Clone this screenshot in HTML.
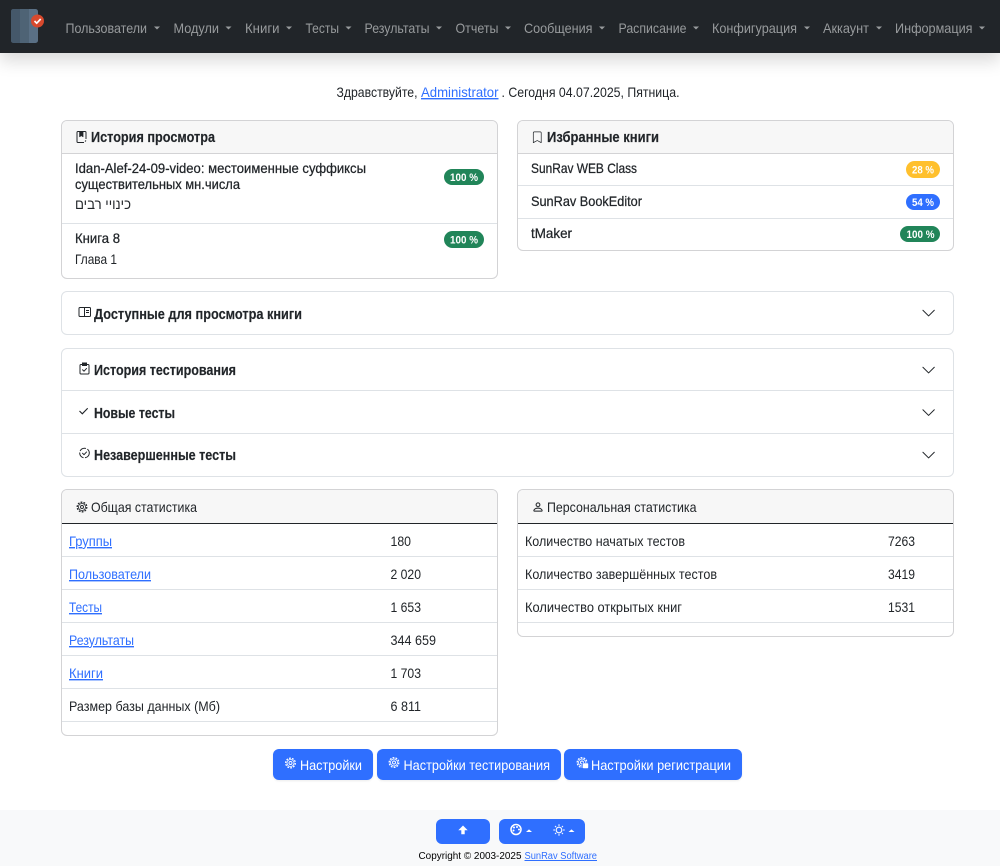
<!DOCTYPE html>
<html lang="ru">
<head>
<meta charset="utf-8">
<title>SunRav WEB Class</title>
<style>
html,body{margin:0;padding:0;background:#fff;width:1000px;height:866px;overflow:hidden;font-family:"Liberation Sans",sans-serif;}
.b{position:absolute;box-sizing:border-box;}
.card{border:1px solid #d3d3d5;border-radius:6px;background:#fff;}
.acc{border:1px solid #dee2e6;border-radius:6px;background:#fff;}
.hd{background:#f7f7f7;border-radius:5px 5px 0 0;}
.btn{background:#2f6fff;border-radius:6px;}
svg.o{position:absolute;left:0;top:0;}
svg.o text{font-family:"Liberation Sans",sans-serif;font-size:14px;fill:#212529;}
svg.o .n{fill:#989b9d;}
svg.o .h{font-weight:bold;font-size:14.5px;stroke:#212529;stroke-width:.15px;}
svg.o .m{stroke:#212529;stroke-width:.25px;}
svg.o .l{fill:#2f6fff;text-decoration:underline;}
svg.o .w{fill:#fff;}
svg.o .bd{fill:#fff;font-weight:bold;font-size:11px;}
.ln{fill:#dee2e6;}
</style>
</head>
<body>
<div class="b" style="left:0;top:0;width:1000px;height:53px;background:#212529;box-shadow:0 8px 16px rgba(0,0,0,.15);"></div>

<div class="b card" style="left:61px;top:120px;width:437px;height:159px;"></div>
<div class="b hd" style="left:62px;top:121px;width:435px;height:33px;border-bottom:1px solid #d3d3d5;"></div>
<div class="b card" style="left:517px;top:120px;width:437px;height:131px;"></div>
<div class="b hd" style="left:518px;top:121px;width:435px;height:33px;border-bottom:1px solid #d3d3d5;"></div>

<div class="b acc" style="left:61px;top:291px;width:893px;height:44px;"></div>
<div class="b acc" style="left:61px;top:348px;width:893px;height:129px;"></div>

<div class="b card" style="left:61px;top:489px;width:437px;height:247px;"></div>
<div class="b hd" style="left:62px;top:490px;width:435px;height:34px;border-bottom:1px solid #212529;"></div>
<div class="b card" style="left:517px;top:489px;width:437px;height:148px;"></div>
<div class="b hd" style="left:518px;top:490px;width:435px;height:34px;border-bottom:1px solid #212529;"></div>

<div class="b btn" style="left:273px;top:749px;width:100px;height:31px;box-shadow:0 1px 2px rgba(0,0,0,.08);"></div>
<div class="b btn" style="left:377px;top:749px;width:184px;height:31px;box-shadow:0 1px 2px rgba(0,0,0,.08);"></div>
<div class="b btn" style="left:564px;top:749px;width:178px;height:31px;box-shadow:0 1px 2px rgba(0,0,0,.08);"></div>

<div class="b" style="left:0;top:810px;width:1000px;height:56px;background:#f8f9fa;"></div>
<div class="b btn" style="left:436px;top:819px;width:54px;height:25px;"></div>
<div class="b btn" style="left:499px;top:819px;width:86px;height:25px;"></div>

<svg class="o" width="1000" height="866" viewBox="0 0 1000 866" xmlns="http://www.w3.org/2000/svg">
<defs>
<g id="gear"><circle cx="6" cy="6" r="4.800" fill="none" stroke-width="1.300" stroke-dasharray="1.800 1.200"/><circle cx="6" cy="6" r="3.500" fill="none" stroke-width=".8"/><circle cx="6" cy="6" r="1.500" fill="none" stroke-width=".9"/></g>
<path id="chev" d="M1.646 4.646a.5.5 0 0 1 .708 0L8 10.293l5.646-5.647a.5.5 0 0 1 .708.708l-6 6a.5.5 0 0 1-.708 0l-6-6a.5.5 0 0 1 0-.708z"/>
</defs>

<!-- logo -->
<rect x="11" y="9" width="27" height="34" rx="2.500" fill="#5a7085"/>
<path d="M13.500 9H20V43H13.500A2.500 2.500 0 0 1 11 40.500V11.500A2.500 2.500 0 0 1 13.500 9Z" fill="#45586a"/>
<rect x="20" y="9" width="9" height="34" fill="#4e6375"/>
<circle cx="37.500" cy="21" r="6.500" fill="#d8492d"/>
<path d="M34.500 21l2.200 2.200 4-4.200" fill="none" stroke="#fff" stroke-width="1.700"/>

<!-- nav -->
<g class="nav">
<text class="n" x="65.500" y="33" textLength="81.500" lengthAdjust="spacingAndGlyphs">Пользователи</text>
<text class="n" x="173.500" y="33" textLength="45.500" lengthAdjust="spacingAndGlyphs">Модули</text>
<text class="n" x="245" y="33" textLength="34.500" lengthAdjust="spacingAndGlyphs">Книги</text>
<text class="n" x="305.500" y="33" textLength="33.500" lengthAdjust="spacingAndGlyphs">Тесты</text>
<text class="n" x="364.500" y="33" textLength="65" lengthAdjust="spacingAndGlyphs">Результаты</text>
<text class="n" x="455.500" y="33" textLength="43" lengthAdjust="spacingAndGlyphs">Отчеты</text>
<text class="n" x="524" y="33" textLength="68.500" lengthAdjust="spacingAndGlyphs">Сообщения</text>
<text class="n" x="618.500" y="33" textLength="68" lengthAdjust="spacingAndGlyphs">Расписание</text>
<text class="n" x="712" y="33" textLength="85" lengthAdjust="spacingAndGlyphs">Конфигурация</text>
<text class="n" x="823" y="33" textLength="46" lengthAdjust="spacingAndGlyphs">Аккаунт</text>
<text class="n" x="895" y="33" textLength="77.500" lengthAdjust="spacingAndGlyphs">Информация</text>
<g fill="#989b9d">
<path d="M154 26.500h6l-3 3z"/><path d="M225.500 26.500h6l-3 3z"/><path d="M286 26.500h6l-3 3z"/><path d="M345.500 26.500h6l-3 3z"/><path d="M436 26.500h6l-3 3z"/><path d="M505 26.500h6l-3 3z"/><path d="M599 26.500h6l-3 3z"/><path d="M693 26.500h6l-3 3z"/><path d="M804 26.500h6l-3 3z"/><path d="M876 26.500h6l-3 3z"/><path d="M979 26.500h6l-3 3z"/>
</g>
</g>

<!-- greeting -->
<text x="336.500" y="97" textLength="81" lengthAdjust="spacingAndGlyphs">Здравствуйте,</text>
<text class="l" x="421" y="97" textLength="77.500" lengthAdjust="spacingAndGlyphs">Administrator</text>
<text x="501.500" y="97" textLength="178" lengthAdjust="spacingAndGlyphs">. Сегодня 04.07.2025, Пятница.</text>

<!-- card 1 -->
<g fill="none" stroke="#212529" stroke-width="1"><path d="M84 142.500H78a1 1 0 0 1-1-1V132.500a1 1 0 0 1 1-1H85a1 1 0 0 1 1 1V139"/><path d="M79.500 132v5l1.800-1.200 1.800 1.200v-5z" fill="#212529" stroke-width=".5"/><path d="M85 141.500l1-1" /></g>
<text class="h" x="91" y="142" textLength="124" lengthAdjust="spacingAndGlyphs">История просмотра</text>
<text class="m" x="75" y="173" textLength="291" lengthAdjust="spacingAndGlyphs">Idan-Alef-24-09-video: местоименные суффиксы</text>
<text class="m" x="75" y="189" textLength="165" lengthAdjust="spacingAndGlyphs">существительных мн.числа</text>
<text x="75" y="209" textLength="56" lengthAdjust="spacingAndGlyphs" direction="rtl" text-anchor="end">כינויי רבים</text>
<rect class="ln" x="62" y="223" width="435" height="1"/>
<text class="m" x="75" y="243" textLength="45" lengthAdjust="spacingAndGlyphs">Книга 8</text>
<text x="75" y="264" textLength="42" lengthAdjust="spacingAndGlyphs">Глава 1</text>
<rect x="444" y="169" width="40" height="16" rx="8" fill="#218559"/>
<text class="bd" x="450" y="181" textLength="28" lengthAdjust="spacingAndGlyphs">100 %</text>
<rect x="444" y="231" width="40" height="17" rx="8.500" fill="#218559"/>
<text class="bd" x="450" y="243.500" textLength="28" lengthAdjust="spacingAndGlyphs">100 %</text>

<!-- card 2 -->
<g transform="translate(531.500,131.500) scale(.72)"><path fill="#212529" d="M2 2a2 2 0 0 1 2-2h8a2 2 0 0 1 2 2v13.500a.5.5 0 0 1-.777.416L8 13.101l-5.223 2.815A.5.5 0 0 1 2 15.500V2zm2-1a1 1 0 0 0-1 1v12.566l4.723-2.482a.5.5 0 0 1 .554 0L13 14.566V2a1 1 0 0 0-1-1H4z"/></g>
<text class="h" x="547" y="142" textLength="112" lengthAdjust="spacingAndGlyphs">Избранные книги</text>
<text class="m" x="531" y="173" textLength="106" lengthAdjust="spacingAndGlyphs">SunRav WEB Class</text>
<rect class="ln" x="518" y="185" width="435" height="1"/>
<text class="m" x="531" y="206" textLength="111" lengthAdjust="spacingAndGlyphs">SunRav BookEditor</text>
<rect class="ln" x="518" y="218" width="435" height="1"/>
<text class="m" x="531" y="238" textLength="41" lengthAdjust="spacingAndGlyphs">tMaker</text>
<rect x="906" y="161" width="34" height="17" rx="8.500" fill="#ffc02d"/>
<text class="bd" x="912" y="173.500" textLength="22" lengthAdjust="spacingAndGlyphs">28 %</text>
<rect x="906" y="194" width="34" height="16" rx="8" fill="#2f6fff"/>
<text class="bd" x="912" y="206" textLength="22" lengthAdjust="spacingAndGlyphs">54 %</text>
<rect x="900" y="226" width="40" height="16" rx="8" fill="#218559"/>
<text class="bd" x="906.500" y="238" textLength="28" lengthAdjust="spacingAndGlyphs">100 %</text>

<!-- accordion -->
<g fill="none" stroke="#212529" stroke-width="1"><rect x="79" y="307.500" width="11.500" height="9" rx="1"/><path d="M84.500 307.500v9"/><path d="M86 310.500h3M86 312.500h3"/></g>
<text class="h" x="94" y="319" textLength="208" lengthAdjust="spacingAndGlyphs">Доступные для просмотра книги</text>
<g fill="none" stroke="#212529" stroke-width="1"><rect x="80" y="364.500" width="9" height="9.500" rx="1"/><rect x="82.500" y="363" width="4" height="2.500" fill="#212529"/><path d="M82.300 369.500l1.700 1.700 2.800-3"/></g>
<text class="h" x="94" y="375" textLength="142" lengthAdjust="spacingAndGlyphs">История тестирования</text>
<rect class="ln" x="62" y="390" width="891" height="1"/>
<path d="M79.500 411l2.800 2.800 5.400-5.600" fill="none" stroke="#212529" stroke-width="1.100"/>
<text class="h" x="94" y="418" textLength="81" lengthAdjust="spacingAndGlyphs">Новые тесты</text>
<rect class="ln" x="62" y="433" width="891" height="1"/>
<g fill="none" stroke="#212529" stroke-width="1"><circle cx="84.500" cy="453" r="4.800" stroke-dasharray="7 1.500"/><path d="M82.300 453l1.700 1.700 2.800-3"/></g>
<text class="h" x="94" y="460" textLength="142" lengthAdjust="spacingAndGlyphs">Незавершенные тесты</text>
<g fill="#212529">
<use href="#chev" transform="translate(921,305.500) scale(.95)"/>
<use href="#chev" transform="translate(921,362.500) scale(.95)"/>
<use href="#chev" transform="translate(921,405) scale(.95)"/>
<use href="#chev" transform="translate(921,447.500) scale(.95)"/>
</g>

<!-- stats left -->
<use href="#gear" transform="translate(76,501)" stroke="#212529"/>
<text x="91" y="512" textLength="106" lengthAdjust="spacingAndGlyphs">Общая статистика</text>
<text class="l" x="69" y="546" textLength="43" lengthAdjust="spacingAndGlyphs">Группы</text>
<text x="390.500" y="546" textLength="20.500" lengthAdjust="spacingAndGlyphs">180</text>
<rect class="ln" x="62" y="556" width="435" height="1"/>
<text class="l" x="69" y="579" textLength="82" lengthAdjust="spacingAndGlyphs">Пользователи</text>
<text x="390.500" y="579" textLength="30.500" lengthAdjust="spacingAndGlyphs">2 020</text>
<rect class="ln" x="62" y="589" width="435" height="1"/>
<text class="l" x="69" y="612" textLength="33" lengthAdjust="spacingAndGlyphs">Тесты</text>
<text x="390.500" y="612" textLength="30.500" lengthAdjust="spacingAndGlyphs">1 653</text>
<rect class="ln" x="62" y="622" width="435" height="1"/>
<text class="l" x="69" y="645" textLength="65" lengthAdjust="spacingAndGlyphs">Результаты</text>
<text x="390.500" y="645" textLength="45.500" lengthAdjust="spacingAndGlyphs">344 659</text>
<rect class="ln" x="62" y="655" width="435" height="1"/>
<text class="l" x="69" y="678" textLength="34" lengthAdjust="spacingAndGlyphs">Книги</text>
<text x="390.500" y="678" textLength="30.500" lengthAdjust="spacingAndGlyphs">1 703</text>
<rect class="ln" x="62" y="688" width="435" height="1"/>
<text x="69" y="711" textLength="151" lengthAdjust="spacingAndGlyphs">Размер базы данных (Мб)</text>
<text x="390.500" y="711" textLength="30.500" lengthAdjust="spacingAndGlyphs">6 811</text>
<rect class="ln" x="62" y="721" width="435" height="1"/>

<!-- stats right -->
<g transform="translate(532,501) scale(.75)"><path fill="#212529" stroke="#212529" stroke-width=".4" d="M8 8a3 3 0 1 0 0-6 3 3 0 0 0 0 6zm2-3a2 2 0 1 1-4 0 2 2 0 0 1 4 0zm4 8c0 1-1 1-1 1H3s-1 0-1-1 1-4 6-4 6 3 6 4zm-1-.004c-.001-.246-.154-.986-.832-1.664C11.516 10.680 10.289 10 8 10c-2.290 0-3.516.680-4.168 1.332-.678.678-.830 1.418-.832 1.664h10z"/></g>
<text x="547" y="512" textLength="149.500" lengthAdjust="spacingAndGlyphs">Персональная статистика</text>
<text x="525" y="546" textLength="160" lengthAdjust="spacingAndGlyphs">Количество начатых тестов</text>
<text x="888" y="546" textLength="27" lengthAdjust="spacingAndGlyphs">7263</text>
<rect class="ln" x="518" y="556" width="435" height="1"/>
<text x="525" y="579" textLength="192" lengthAdjust="spacingAndGlyphs">Количество завершённых тестов</text>
<text x="888" y="579" textLength="27" lengthAdjust="spacingAndGlyphs">3419</text>
<rect class="ln" x="518" y="589" width="435" height="1"/>
<text x="525" y="612" textLength="157" lengthAdjust="spacingAndGlyphs">Количество открытых книг</text>
<text x="888" y="612" textLength="27" lengthAdjust="spacingAndGlyphs">1531</text>
<rect class="ln" x="518" y="622" width="435" height="1"/>

<!-- buttons -->
<use href="#gear" transform="translate(284.500,757)" stroke="#fff"/>
<text class="w" x="300" y="770" textLength="62" lengthAdjust="spacingAndGlyphs">Настройки</text>
<use href="#gear" transform="translate(388,756.500)" stroke="#fff"/>
<text class="w" x="403.500" y="770" textLength="146.500" lengthAdjust="spacingAndGlyphs">Настройки тестирования</text>
<use href="#gear" transform="translate(576,756.500)" stroke="#fff"/>
<rect x="582.500" y="763" width="6" height="5.500" rx="1" fill="#fff" stroke="#2f6fff" stroke-width=".6"/>
<text class="w" x="591" y="770" textLength="140" lengthAdjust="spacingAndGlyphs">Настройки регистрации</text>

<!-- footer -->
<path d="M463 825.500l4.700 4.800h-3v4h-3.400v-4h-3z" fill="#fff"/>
<circle cx="516" cy="829.500" r="5" fill="none" stroke="#fff" stroke-width="1.500"/>
<circle cx="514" cy="827.500" r="1" fill="#fff"/><circle cx="517" cy="827" r="1" fill="#fff"/><circle cx="519" cy="829.500" r="1" fill="#fff"/><circle cx="513.500" cy="830.500" r="1" fill="#fff"/>
<path d="M526 832h6l-3-2.600z" fill="#fff"/>
<circle cx="559" cy="830" r="2.800" fill="none" stroke="#fff" stroke-width="1.100"/>
<path d="M559 824.300v1.800M559 833.900v1.800M553.300 830h1.800M562.900 830h1.800M555 826l1.200 1.200M561.800 832.800l1.200 1.200M555 834l1.200-1.200M561.800 827.200l1.200-1.200" stroke="#fff" stroke-width="1"/>
<path d="M568.500 832h6l-3-2.600z" fill="#fff"/>
<text x="418.500" y="859" textLength="103" lengthAdjust="spacingAndGlyphs" style="font-size:10px;fill:#000">Copyright © 2003-2025</text>
<text class="l" x="524.500" y="859" textLength="72.500" lengthAdjust="spacingAndGlyphs" style="font-size:10px">SunRav Software</text>
</svg>
</body>
</html>
